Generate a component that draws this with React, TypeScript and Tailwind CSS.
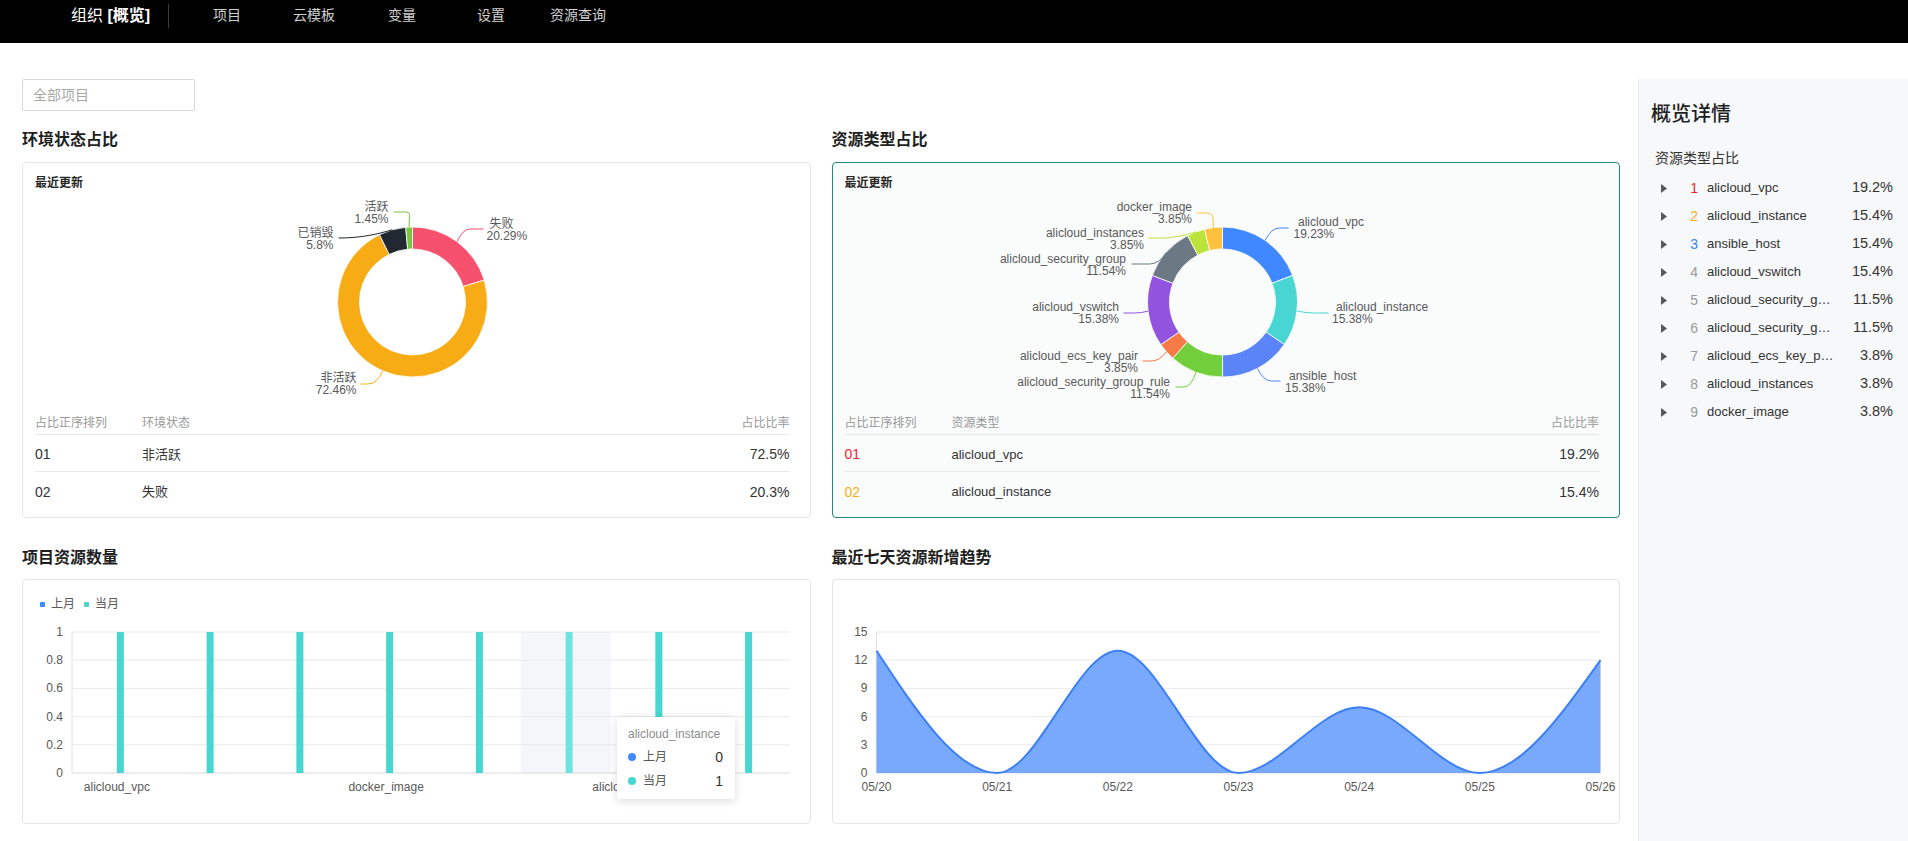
import React from 'react';

type Slice = {
  name: string;
  value: number;
  color: string;
  anchor: 'start' | 'end';
  nx: number;
  px: number;
  ny: number;
  line: string;
};

// label positions are relative to the donut centre
const ENV_SLICES: Slice[] = [
  { name: '失败', value: 20.29, color: '#f5506c', anchor: 'start', nx: 77, px: 74, ny: -78, line: 'M44.6 -60.3 Q50 -73 58 -73 L71 -73' },
  { name: '非活跃', value: 72.46, color: '#f7ac16', anchor: 'end', nx: -56, px: -56, ny: 76, line: 'M-29.9 68.8 Q-35 82 -45 82 L-52 82' },
  { name: '已销毁', value: 5.8, color: '#222831', anchor: 'end', nx: -79, px: -79, ny: -69, line: 'M-20.2 -72.2 C-35 -68 -50 -64 -74 -64' },
  { name: '活跃', value: 1.45, color: '#7cc243', anchor: 'end', nx: -24, px: -24, ny: -95, line: 'M-3.4 -75 L-3 -88 Q-3 -90 -7 -90 L-19 -90' },
];

const RES_SLICES: Slice[] = [
  { name: 'alicloud_vpc', value: 19.23, color: '#3f88ff', anchor: 'start', nx: 75.5, px: 71, ny: -80, line: 'M42.6 -61.7 Q49 -74 57 -74 L66 -74' },
  { name: 'alicloud_instance', value: 15.38, color: '#47d6d1', anchor: 'start', nx: 113.5, px: 109.5, ny: 5, line: 'M74.5 9 Q84 11 91 11 L106 11' },
  { name: 'ansible_host', value: 15.38, color: '#5b84f9', anchor: 'start', nx: 66.5, px: 62.5, ny: 74, line: 'M34.9 66.4 Q41 79 49 79 L58 79' },
  { name: 'alicloud_security_group_rule', value: 11.54, color: '#72cf3b', anchor: 'end', nx: -52.5, px: -52.5, ny: 80, line: 'M-26.5 70.2 Q-31 85 -39 85 L-47 85' },
  { name: 'alicloud_ecs_key_pair', value: 3.85, color: '#f57a45', anchor: 'end', nx: -84.5, px: -84.5, ny: 54, line: 'M-56.1 49.8 Q-63 59 -71 59 L-80 59' },
  { name: 'alicloud_vswitch', value: 15.38, color: '#9254de', anchor: 'end', nx: -103.5, px: -103.5, ny: 5, line: 'M-74.4 9.1 Q-81 11 -88 11 L-99 11' },
  { name: 'alicloud_security_group', value: 11.54, color: '#6c7883', anchor: 'end', nx: -96.5, px: -96.5, ny: -43, line: 'M-56.2 -49.7 Q-63 -38 -73 -38 L-91 -38' },
  { name: 'alicloud_instances', value: 3.85, color: '#bce33a', anchor: 'end', nx: -78.5, px: -78.5, ny: -69, line: 'M-26.6 -70.1 Q-41 -65 -56 -64 L-74 -64' },
  { name: 'docker_image', value: 3.85, color: '#fcc23e', anchor: 'end', nx: -30.5, px: -30.5, ny: -95, line: 'M-9 -74.5 L-9.5 -84 Q-10 -89 -16 -89 L-26 -89' },
];

const DETAILS = [
  { name: 'alicloud_vpc', rate: '19.2%', color: 'text-[#f5222d]' },
  { name: 'alicloud_instance', rate: '15.4%', color: 'text-[#faad14]' },
  { name: 'ansible_host', rate: '15.4%', color: 'text-[#3b82f6]' },
  { name: 'alicloud_vswitch', rate: '15.4%', color: 'text-[#9a9a9a]' },
  { name: 'alicloud_security_group', rate: '11.5%', color: 'text-[#9a9a9a]' },
  { name: 'alicloud_security_group_rule', rate: '11.5%', color: 'text-[#9a9a9a]' },
  { name: 'alicloud_ecs_key_pair', rate: '3.8%', color: 'text-[#9a9a9a]' },
  { name: 'alicloud_instances', rate: '3.8%', color: 'text-[#9a9a9a]' },
  { name: 'docker_image', rate: '3.8%', color: 'text-[#9a9a9a]' },
];

const NAV = [
  { label: '项目', w: 'w-[80px]' },
  { label: '云模板', w: 'w-[95px]' },
  { label: '变量', w: 'w-[89px]' },
  { label: '设置', w: 'w-[73px]' },
  { label: '资源查询', w: 'w-auto' },
];

const arcPath = (cx: number, cy: number, r0: number, r1: number, a0: number, a1: number) => {
  const pt = (r: number, a: number) => `${(cx + r * Math.sin(a)).toFixed(2)} ${(cy - r * Math.cos(a)).toFixed(2)}`;
  const large = a1 - a0 > Math.PI ? 1 : 0;
  return `M${pt(r1, a0)} A${r1} ${r1} 0 ${large} 1 ${pt(r1, a1)} L${pt(r0, a1)} A${r0} ${r0} 0 ${large} 0 ${pt(r0, a0)} Z`;
};

function Donut({ slices }: { slices: Slice[] }) {
  const cx = 377.5;
  const cy = 111;
  const total = slices.reduce((s, d) => s + d.value, 0);
  let acc = 0;
  const arcs = slices.map((d) => {
    const a0 = (acc / total) * Math.PI * 2;
    acc += d.value;
    return { ...d, a0, a1: (acc / total) * Math.PI * 2 };
  });
  return (
    <svg width={755} height={221} className="block">
      {arcs.map((d) => (
        <path key={d.name} d={arcPath(cx, cy, 53, 75, d.a0, d.a1)} fill={d.color} stroke="#fff" strokeWidth={0.8} />
      ))}
      <g transform={`translate(${cx} ${cy})`} fontSize={12} fill="#595959">
        {slices.map((d) => (
          <g key={d.name}>
            <path d={d.line} fill="none" stroke={d.color} strokeWidth={1} />
            <text x={d.nx} y={d.ny} textAnchor={d.anchor} dominantBaseline="central">{d.name}</text>
            <text x={d.px} y={d.ny + 11.5} textAnchor={d.anchor} dominantBaseline="central">{d.value}%</text>
          </g>
        ))}
      </g>
    </svg>
  );
}

type RankRow = { no: string; name: string; rate: string; noColor: string };

function RankTable({ label, rows }: { label: string; rows: RankRow[] }) {
  return (
    <div className="text-[13px] text-[#333]">
      <div className="flex h-[23px] items-center border-b border-[#e8e8e8] text-[12px] text-[#999]">
        <span className="w-[107px]">占比正序排列</span>
        <span className="flex-1">{label}</span>
        <span>占比比率</span>
      </div>
      {rows.map((r, i) => (
        <div key={r.no} className={`flex h-[37px] items-center pt-[3px] ${i === 0 ? 'border-b border-[#e8e8e8]' : ''}`}>
          <span className={`w-[107px] text-[14px] ${r.noColor}`}>{r.no}</span>
          <span className="flex-1">{r.name}</span>
          <span className="text-[14px]">{r.rate}</span>
        </div>
      ))}
    </div>
  );
}

function RatioCard({ active, slices, label, rows }: { active?: boolean; slices: Slice[]; label: string; rows: RankRow[] }) {
  return (
    <div
      className={`h-[356px] rounded-[4px] border pl-[12px] pr-[20px] pt-[12px] ${
        active ? 'border-[#1f8a76] bg-[#fafcfc]' : 'border-[#e4e6eb] bg-white'
      }`}
    >
      <div className="text-[12px] font-semibold leading-[16px] text-[#262626]">最近更新</div>
      <Donut slices={slices} />
      <RankTable label={label} rows={rows} />
    </div>
  );
}

function BarChart() {
  const x0 = 49;
  const x1 = 767;
  const top = 21;
  const bottom = 162;
  const cw = (x1 - x0) / 8;
  const ticks = [1, 0.8, 0.6, 0.4, 0.2, 0];
  const labels: Record<number, string> = { 0: 'alicloud_vpc', 3: 'docker_image', 6: 'alicloud_security_group' };
  return (
    <svg width={786} height={200} className="block" fontSize={12} fill="#595959">
      <rect x={x0 + cw * 5} y={top} width={cw} height={bottom - top} fill="#f4f6fa" />
      {ticks.map((t) => {
        const y = bottom - t * (bottom - top);
        return (
          <g key={t}>
            <line x1={x0} x2={x1} y1={y} y2={y} stroke={t === 0 ? '#d9d9d9' : '#e9e9ee'} />
            <text x={40} y={y} textAnchor="end" dominantBaseline="central">{t}</text>
          </g>
        );
      })}
      <line x1={x0} x2={x0} y1={top} y2={bottom} stroke="#e0e0e4" />
      {Array.from({ length: 8 }).map((_, i) => (
        <rect key={i} x={x0 + cw * (i + 0.5)} y={top} width={7} height={bottom - top} fill={i === 5 ? '#6fe3de' : '#47d6d1'} />
      ))}
      {Object.entries(labels).map(([i, l]) => (
        <text key={i} x={x0 + cw * (Number(i) + 0.5)} y={176} textAnchor="middle" dominantBaseline="central">{l}</text>
      ))}
    </svg>
  );
}

function AreaChart() {
  const vals = [13, 0, 13, 0, 7, 0, 12];
  const days = ['05/20', '05/21', '05/22', '05/23', '05/24', '05/25', '05/26'];
  const x0 = 43.5;
  const x1 = 767.5;
  const top = 52;
  const bottom = 193;
  const xs = vals.map((_, i) => x0 + (i * (x1 - x0)) / 6);
  const ys = vals.map((v) => bottom - (v * (bottom - top)) / 15);
  const n = xs.length;
  const s = xs.slice(0, -1).map((x, i) => (ys[i + 1] - ys[i]) / (xs[i + 1] - x));
  const t: number[] = new Array(n).fill(0);
  for (let i = 1; i < n - 1; i++) {
    const a = s[i - 1];
    const b = s[i];
    t[i] = Math.sign(a) + Math.sign(b) === 0 ? 0 : (Math.sign(a) + Math.sign(b)) * Math.min(Math.abs(a), Math.abs(b), 0.5 * Math.abs((a + b) / 2));
  }
  t[0] = (3 * s[0] - t[1]) / 2;
  t[n - 1] = (3 * s[n - 2] - t[n - 2]) / 2;
  let line = `M${xs[0]} ${ys[0]}`;
  for (let i = 0; i < n - 1; i++) {
    const d = (xs[i + 1] - xs[i]) / 3;
    line += ` C${xs[i] + d} ${ys[i] + d * t[i]} ${xs[i + 1] - d} ${ys[i + 1] - d * t[i + 1]} ${xs[i + 1]} ${ys[i + 1]}`;
  }
  const area = `${line} L${x1} ${bottom} L${x0} ${bottom} Z`;
  return (
    <svg width={786} height={243} className="block overflow-visible" fontSize={12} fill="#595959">
      {[15, 12, 9, 6, 3, 0].map((v) => {
        const y = bottom - (v * (bottom - top)) / 15;
        return (
          <g key={v}>
            <line x1={x0} x2={x1} y1={y} y2={y} stroke={v === 0 ? '#d9d9d9' : '#e9e9ee'} />
            <text x={34.5} y={y} textAnchor="end" dominantBaseline="central">{v}</text>
          </g>
        );
      })}
      <line x1={x0} x2={x0} y1={top} y2={bottom} stroke="#e0e0e4" />
      <path d={area} fill="#79a9fc" />
      <path d={line} fill="none" stroke="#3d7ff4" strokeWidth={2} />
      {days.map((d, i) => (
        <text key={d} x={xs[i]} y={207} textAnchor="middle" dominantBaseline="central">{d}</text>
      ))}
    </svg>
  );
}

function SectionTitle({ children, top }: { children: React.ReactNode; top: string }) {
  return <h2 className={`${top} text-[16px] font-semibold leading-[24px] text-[#1f1f1f]`}>{children}</h2>;
}

export default function App() {
  return (
    <div className="min-h-[841px] bg-white font-['Liberation_Sans','Noto_Sans_CJK_SC',sans-serif] text-[#333]">
      {/* top bar */}
      <header className="h-[43px] bg-black">
        <div className="flex h-[31px] items-center pl-[71px]">
          <div className="w-[97px] text-[16px] text-white">
            组织 <span className="font-bold">[概览]</span>
          </div>
          <div className="h-[24px] w-px bg-[#3a3a3a]" />
          <nav className="ml-[44px] flex text-[14px] text-[#cfcfcf]">
            {NAV.map((n) => (
              <span key={n.label} className={n.w}>{n.label}</span>
            ))}
          </nav>
        </div>
      </header>

      <div className="flex min-h-[798px]">
        <main className="flex-1 pb-[10px] pl-[22px] pr-[18px] pt-[36px]">
          <input
            readOnly
            placeholder="全部项目"
            className="block h-[32px] w-[173px] rounded-[2px] border border-[#d9d9d9] px-[10px] text-[14px] outline-none placeholder:text-[#a8a8a8]"
          />
          <div className="grid grid-cols-2 gap-x-[21px]">
            <section>
              <SectionTitle top="mt-[17px] mb-[10px]">环境状态占比</SectionTitle>
              <RatioCard
                slices={ENV_SLICES}
                label="环境状态"
                rows={[
                  { no: '01', name: '非活跃', rate: '72.5%', noColor: 'text-[#333]' },
                  { no: '02', name: '失败', rate: '20.3%', noColor: 'text-[#333]' },
                ]}
              />
            </section>
            <section>
              <SectionTitle top="mt-[17px] mb-[10px]">资源类型占比</SectionTitle>
              <RatioCard
                active
                slices={RES_SLICES}
                label="资源类型"
                rows={[
                  { no: '01', name: 'alicloud_vpc', rate: '19.2%', noColor: 'text-[#f5222d]' },
                  { no: '02', name: 'alicloud_instance', rate: '15.4%', noColor: 'text-[#faad14]' },
                ]}
              />
            </section>
            <section>
              <SectionTitle top="mt-[28px] mb-[9px]">项目资源数量</SectionTitle>
              <div className="relative h-[245px] rounded-[4px] border border-[#e4e6eb]">
                <div className="flex h-[31px] items-center pl-[17px] pt-[17px] text-[12px] leading-[14px] text-[#595959]">
                  <span className="h-[5px] w-[5px] rounded-[1px] bg-[#3f88ff]" />
                  <span className="ml-[6px]">上月</span>
                  <span className="ml-[9px] h-[5px] w-[5px] rounded-[1px] bg-[#47d6d1]" />
                  <span className="ml-[6px]">当月</span>
                </div>
                <BarChart />
                {/* hover tooltip */}
                <div className="absolute left-[594px] top-[137px] w-[118px] rounded-[4px] bg-white pb-[6px] pl-[11px] pr-[12px] pt-[9px] shadow-[0_2px_10px_rgba(0,0,0,0.14)]">
                  <div className="text-[12px] leading-[16px] text-[#8c8c8c]">alicloud_instance</div>
                  <div className="mt-[3px] flex h-[24px] items-center">
                    <span className="h-[8px] w-[8px] rounded-full bg-[#3f88ff]" />
                    <span className="ml-[7px] flex-1 text-[12px] text-[#595959]">上月</span>
                    <span className="text-[14px] text-[#333]">0</span>
                  </div>
                  <div className="flex h-[24px] items-center">
                    <span className="h-[8px] w-[8px] rounded-full bg-[#47d6d1]" />
                    <span className="ml-[7px] flex-1 text-[12px] text-[#595959]">当月</span>
                    <span className="text-[14px] text-[#333]">1</span>
                  </div>
                </div>
              </div>
            </section>
            <section>
              <SectionTitle top="mt-[28px] mb-[9px]">最近七天资源新增趋势</SectionTitle>
              <div className="h-[245px] rounded-[4px] border border-[#e4e6eb]">
                <AreaChart />
              </div>
            </section>
          </div>
        </main>

        {/* overview details */}
        <aside className="mt-[36px] w-[270px] shrink-0 border-l border-[#e8eaee] bg-[#f7f8fa] pl-[12px] pr-[15px] pt-[21px]">
          <h3 className="text-[20px] font-medium leading-[28px] text-[#1f1f1f]">概览详情</h3>
          <div className="mt-[20px] pl-[4px] text-[14px] leading-[20px] text-[#333]">资源类型占比</div>
          <ul className="mt-[6px]">
            {DETAILS.map((d, i) => (
              <li key={d.name} className="flex h-[28px] items-center pl-[10px]">
                <svg width={6} height={9} viewBox="0 0 6 9" className="shrink-0">
                  <polygon points="0,0 6,4.5 0,9" fill="#595959" />
                </svg>
                <span className={`w-[31px] shrink-0 text-right text-[14px] ${d.color}`}>{i + 1}</span>
                <span className="ml-[9px] w-[127px] shrink-0 truncate text-[13px] text-[#333]">{d.name}</span>
                <span className="flex-1 text-right text-[14.5px] text-[#333]">{d.rate}</span>
              </li>
            ))}
          </ul>
        </aside>
      </div>
    </div>
  );
}
